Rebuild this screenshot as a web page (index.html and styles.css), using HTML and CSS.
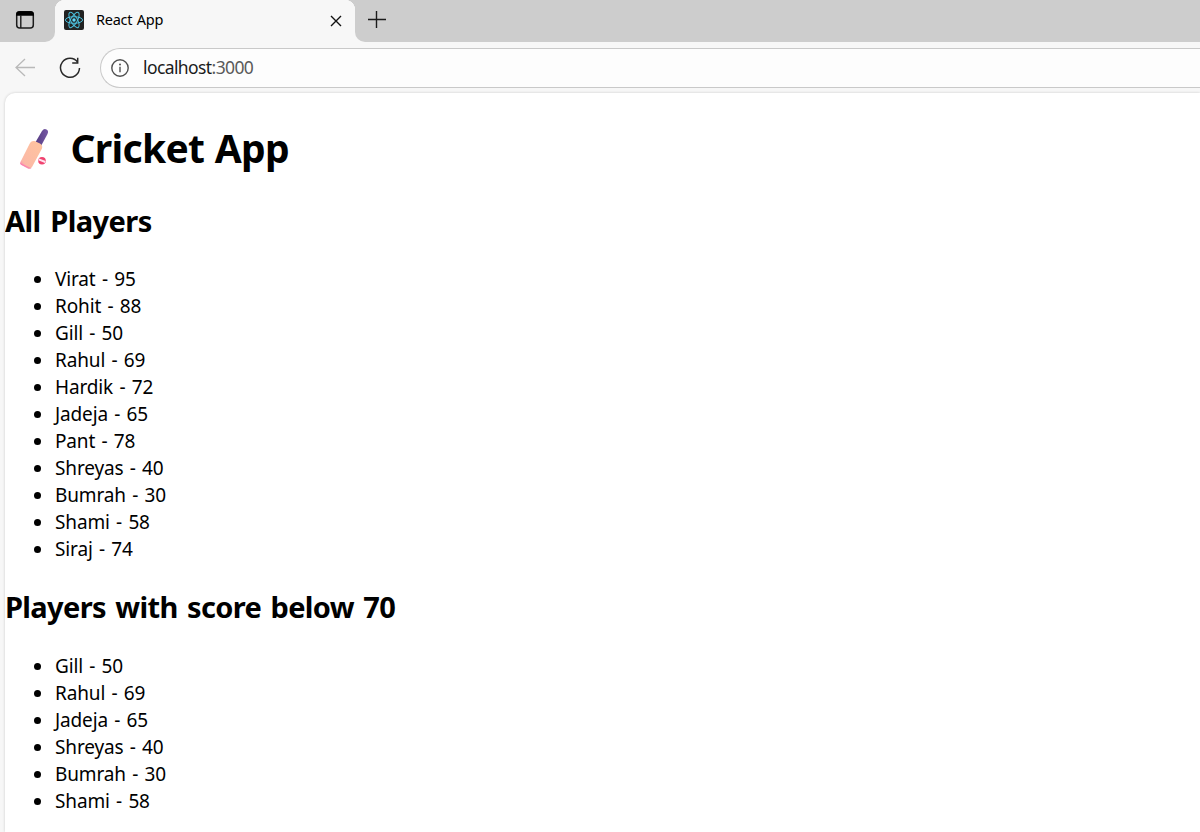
FILE: index.html
```html
<!DOCTYPE html>
<html lang="en">
<head>
<meta charset="utf-8">
<title>React App</title>
<link rel="stylesheet" href="styles.css">
</head>
<body>
<div class="window">
  <header class="tabstrip">
    <div class="tab-actions">
      <svg width="20" height="20" viewBox="0 0 20 20"><rect x="1.7" y="1.7" width="16.6" height="16.2" rx="3" fill="none" stroke="#1b1b1b" stroke-width="1.5"/><path d="M1.2 5.8V4.2a3 3 0 0 1 3-3h11.6a3 3 0 0 1 3 3v1.6z" fill="#000"/><path d="M5.8 5v13" stroke="#1b1b1b" stroke-width="1.4"/></svg>
    </div>
    <div class="tab">
      <svg class="favicon" width="20" height="20" viewBox="0 0 20 20"><rect width="20" height="20" rx="2" fill="#222"/><g fill="none" stroke="#4cbfdd" stroke-width="1"><ellipse cx="10" cy="10" rx="8.6" ry="3.3"/><ellipse cx="10" cy="10" rx="8.6" ry="3.3" transform="rotate(60 10 10)"/><ellipse cx="10" cy="10" rx="8.6" ry="3.3" transform="rotate(120 10 10)"/></g><circle cx="10" cy="10" r="1.7" fill="#61dafb"/></svg>
      <span class="tab-title">React App</span>
      <svg class="close" width="12" height="12" viewBox="0 0 12 12"><path d="M1 1l10 10M11 1L1 11" stroke="#111" stroke-width="1.4"/></svg>
    </div>
    <div class="new-tab">
      <svg width="18" height="18" viewBox="0 0 18 18"><path d="M0 9.5h18M8.5 1v17" stroke="#1b1b1b" stroke-width="1.4"/></svg>
    </div>
  </header>
  <nav class="toolbar">
    <svg class="back" width="20" height="20" viewBox="0 0 20 20"><path d="M20 10.5H1M10 2L1 10.5l9 8.500" fill="none" stroke="#b9b9b9" stroke-width="1.3"/></svg>
    <svg class="reload" width="22" height="22" viewBox="0 0 22 22"><path d="M18.7 5.2A9.5 9.5 0 1 0 20.5 11M18.7 0.8v5.1h-5.5" fill="none" stroke="#292929" stroke-width="1.5"/></svg>
    <div class="address">
      <svg width="18" height="18" viewBox="0 0 18 18"><circle cx="9" cy="9" r="8.2" fill="none" stroke="#505050" stroke-width="1.4"/><path d="M9 7.8v5.4" stroke="#505050" stroke-width="1.4"/><circle cx="9" cy="5.4" r="1" fill="#505050"/></svg>
      <span class="url">localhost<span class="port">:3000</span></span>
    </div>
  </nav>
  <main class="page">
    <h1>
      <svg class="bat" width="40" height="44" viewBox="0 0 40 44">
        <defs>
          <linearGradient id="blade" x1="1" y1="0" x2="0" y2="1"><stop offset="0" stop-color="#ffc49e"/><stop offset=".8" stop-color="#fbb9a6"/><stop offset="1" stop-color="#fb6eb5"/></linearGradient>
          <linearGradient id="handle" x1="0" y1="0" x2="1" y2="0"><stop offset="0" stop-color="#533b80"/><stop offset="1" stop-color="#7658a4"/></linearGradient>
        </defs>
        <path d="M19 16l7-12q2-3 4.500-1.500t1 4.500L25 19z" fill="url(#handle)"/>
        <path d="M4.200 35.500L13.500 17q1.500-3.500 5-3l5.500 2.500q3 2 2 5L16 40q-1.500 2.500-4 1.500l-6.500-3.500q-2-1-1.300-2.500z" fill="url(#blade)"/>
        <path d="M4.200 36l11.300 5.200q-1.500 1-3.500.3l-6.500-3.500q-1.500-.9-1.300-2z" fill="#fb62b2" opacity=".5"/>
        <circle cx="26" cy="33.700" r="3.800" fill="#f04470"/><path d="M22.700 32.400l6.600 2.600" stroke="#ffe3ef" stroke-width="1.900"/>
      </svg>
      <span class="title">Cricket App</span>
    </h1>
    <h2 class="all">All Players</h2>
    <ul>
      <li>Virat - 95</li>
      <li>Rohit - 88</li>
      <li>Gill - 50</li>
      <li>Rahul - 69</li>
      <li>Hardik - 72</li>
      <li>Jadeja - 65</li>
      <li>Pant - 78</li>
      <li>Shreyas - 40</li>
      <li>Bumrah - 30</li>
      <li>Shami - 58</li>
      <li>Siraj - 74</li>
    </ul>
    <h2 class="below">Players with score below 70</h2>
    <ul>
      <li>Gill - 50</li>
      <li>Rahul - 69</li>
      <li>Jadeja - 65</li>
      <li>Shreyas - 40</li>
      <li>Bumrah - 30</li>
      <li>Shami - 58</li>
    </ul>
  </main>
</div>
</body>
</html>
```
FILE: styles.css
```css
* { box-sizing: border-box; }
body { margin: 0; background: #f7f7f7; color: #000; font-family: "Noto Sans", "Open Sans", sans-serif; }
svg { display: block; flex: none; }
.window { width: 100%; height: 832px; overflow: hidden; display: flex; flex-direction: column; }
.tabstrip { height: 42px; flex: none; display: flex; background: #f7f7f7; }
.tab-actions { width: 55px; background: #cdcdcd; border-radius: 0 0 10px 0; padding: 10px 0 0 15px; }
.tab { width: 300px; display: flex; align-items: center; padding: 0 13px 2px 9px; background: radial-gradient(circle at 10px 10px, #f7f7f7 10px, #cdcdcd 10.500px) 0 0 / 10px 10px no-repeat, radial-gradient(circle at 0 10px, #f7f7f7 10px, #cdcdcd 10.500px) 100% 0 / 10px 10px no-repeat, #f7f7f7; }
.tab-title { margin-left: 12px; font-size: 14.500px; letter-spacing: -0.25px; word-spacing: 1px; flex: 1; line-height: 20px; padding-bottom: 2px; }
.close { margin-top: 1px; }
.new-tab { flex: 1; background: #cdcdcd; border-radius: 0 0 0 10px; padding: 10px 0 0 13px; }
.toolbar { height: 51px; flex: none; display: flex; align-items: flex-start; padding-top: 6px; }
.back { margin: 9px 0 0 15px; }
.reload { margin: 9px 0 0 24px; }
.address { margin-left: 19px; flex: 1; height: 40px; display: flex; align-items: center; border: 1px solid #c9c9c9; border-width: 1px 0 1px 1px; border-radius: 20px 0 0 20px; background: #fdfdfd; padding-left: 10px; }
.url { margin-left: 14px; font-size: 17.500px; letter-spacing: -0.6px; color: #1b1b1b; line-height: 24px; padding-bottom: 2px; }
.port { color: #5a5a5a; }
.page { flex: 1; margin-left: 5px; background: #fff; border-radius: 10px 0 0 0; box-shadow: 0 0 3px rgba(0, 0, 0, .18); overflow: hidden; }
h1 { margin: 28px 0 0; height: 54px; display: flex; align-items: center; font-size: 39px; line-height: 54px; white-space: nowrap; }
.bat { margin: 1px 0 0 11px; }
.title { margin-left: 14.500px; letter-spacing: -0.7px; word-spacing: 1px; }
h2 { margin: 26px 0 0; height: 40px; line-height: 40px; font-size: 29px; white-space: nowrap; letter-spacing: -0.55px; word-spacing: 2.500px; }
.below { margin-top: 24px; letter-spacing: -0.65px; }
ul { margin: 25px 0 0; padding: 0 0 0 50px; list-style: none; }
.below + ul { margin-top: 26px; }
li { height: 27px; display: flex; align-items: center; font-size: 19px; line-height: 27px; white-space: nowrap; letter-spacing: -0.14px; word-spacing: 1.500px; }
li::before { content: ""; width: 7px; height: 7px; margin: 0 14px 0 -21px; border-radius: 50%; background: #000; }
```
